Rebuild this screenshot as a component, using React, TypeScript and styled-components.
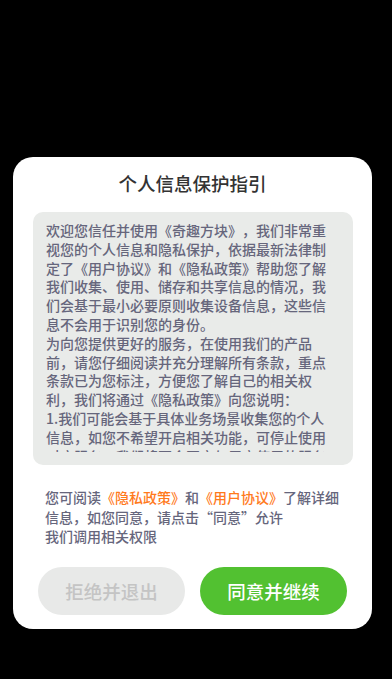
import React from 'react';
import styled, { createGlobalStyle } from 'styled-components';

const GlobalStyle = createGlobalStyle`
  html, body {
    margin: 0;
    padding: 0;
    background: #000;
  }
  * {
    box-sizing: border-box;
  }
  body {
    font-family: "Noto Sans CJK SC", "Noto Sans", sans-serif;
    text-spacing-trim: space-all;
  }
`;

const Overlay = styled.div`
  width: 100%;
  min-height: 679px;
  background-color: #000;
  padding: 157px 20px 0 13px;
`;

const Dialog = styled.div`
  width: 359px;
  background-color: #fff;
  border-radius: 20px;
  padding: 15px 0 14px;
`;

const Title = styled.h1`
  margin: 0;
  text-align: center;
  font-size: 18.5px;
  line-height: 22px;
  font-weight: 500;
  color: #333;
`;

const ContentBox = styled.div`
  margin: 18px 19px 0 20px;
  height: 253px;
  background-color: #e9ebe9;
  border-radius: 10px;
  padding: 9px 20px 13px 13px;
`;

const Scroll = styled.div`
  height: 231px;
  overflow: hidden;
  font-size: 14px;
  line-height: 18.8px;
  font-weight: 500;
  color: #66667c;
  text-spacing-trim: space-all;

  p {
    margin: 0;
  }
`;

const Notice = styled.p`
  margin: 23px 0 0;
  padding: 0 24px 0 32px;
  font-size: 14px;
  line-height: 19.5px;
  font-weight: 500;
  color: #66667c;
  text-spacing-trim: space-all;
`;

const Link = styled.span`
  color: #ff7a1c;
`;

const Footer = styled.div`
  display: flex;
  gap: 15px;
  margin-top: 20px;
  padding: 0 25px;
`;

const Button = styled.button<{ $primary?: boolean }>`
  flex: 1;
  height: 48px;
  border: none;
  border-radius: 24px;
  font-family: inherit;
  font-size: 18.5px;
  font-weight: 500;
  background-color: ${(p) => (p.$primary ? '#52c131' : '#e8e9e8')};
  color: ${(p) => (p.$primary ? '#fff' : '#c4c4c4')};
`;

export default function App() {
  return (
    <>
      <GlobalStyle />
      <Overlay>
        <Dialog>
          <Title>个人信息保护指引</Title>
          <ContentBox>
            <Scroll>
              <p>
                欢迎您信任并使用《奇趣方块》，我们非常重视您的个人信息和隐私保护，依据最新法律制定了《用户协议》和《隐私政策》帮助您了解我们收集、使用、储存和共享信息的情况，我们会基于最小必要原则收集设备信息，这些信息不会用于识别您的身份。
              </p>
              <p>
                为向您提供更好的服务，在使用我们的产品前，请您仔细阅读并充分理解所有条款，重点条款已为您标注，方便您了解自己的相关权利，我们将通过《隐私政策》向您说明：
              </p>
              <p>
                1.我们可能会基于具体业务场景收集您的个人信息，如您不希望开启相关功能，可停止使用对应服务，我们将不会开启与用户使用的服务无关的功能。
              </p>
              <p>
                2.未经您的同意，我们不会将您的个人信息共享给第三方。
              </p>
            </Scroll>
          </ContentBox>
          <Notice>
            您可阅读<Link>《隐私政策》</Link>和<Link>《用户协议》</Link>了解详细信息，如您同意，请点击“同意”允许
            <br />
            我们调用相关权限
          </Notice>
          <Footer>
            <Button>拒绝并退出</Button>
            <Button $primary>同意并继续</Button>
          </Footer>
        </Dialog>
      </Overlay>
    </>
  );
}
